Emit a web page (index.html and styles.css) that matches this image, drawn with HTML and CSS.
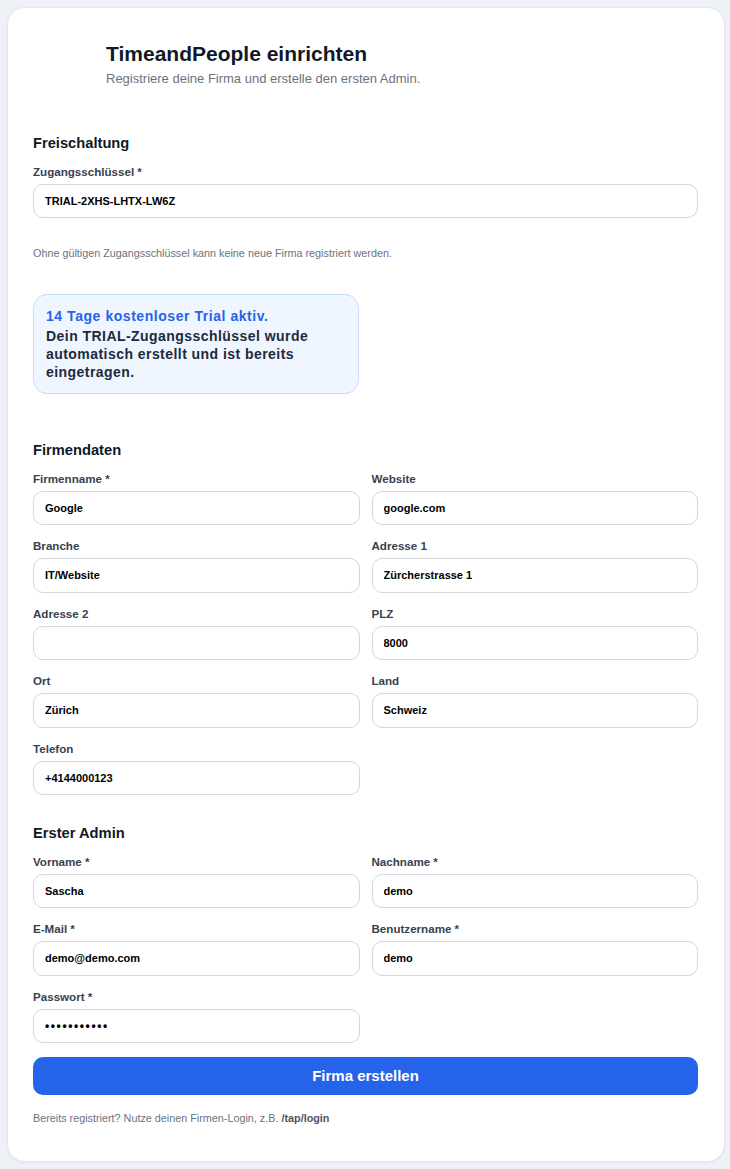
FILE: index.html
```html
<!DOCTYPE html>
<html lang="de">
<head>
<meta charset="utf-8">
<title>TimeandPeople einrichten</title>
<link rel="stylesheet" href="styles.css">
</head>
<body>
<main class="card">
  <header class="head">
    <div class="logo-slot"></div>
    <div class="head-text">
      <h1 class="title">TimeandPeople einrichten</h1>
      <p class="subtitle">Registriere deine Firma und erstelle den ersten Admin.</p>
    </div>
  </header>

  <section class="section">
    <h2 class="section-title">Freischaltung</h2>
    <div class="field">
      <label class="label">Zugangsschlüssel *</label>
      <input class="input" type="text" value="TRIAL-2XHS-LHTX-LW6Z">
    </div>
    <p class="hint">Ohne gültigen Zugangsschlüssel kann keine neue Firma registriert werden.</p>
    <div class="trial">
      <div class="trial-title">14 Tage kostenloser Trial aktiv.</div>
      <div class="trial-body">Dein TRIAL-Zugangsschlüssel wurde automatisch erstellt und ist bereits eingetragen.</div>
    </div>
  </section>

  <section class="section section-company">
    <h2 class="section-title">Firmendaten</h2>
    <div class="grid">
      <div class="field"><label class="label">Firmenname *</label><input class="input" type="text" value="Google"></div>
      <div class="field"><label class="label">Website</label><input class="input" type="text" value="google.com"></div>
      <div class="field"><label class="label">Branche</label><input class="input" type="text" value="IT/Website"></div>
      <div class="field"><label class="label">Adresse 1</label><input class="input" type="text" value="Zürcherstrasse 1"></div>
      <div class="field"><label class="label">Adresse 2</label><input class="input" type="text" value=""></div>
      <div class="field"><label class="label">PLZ</label><input class="input" type="text" value="8000"></div>
      <div class="field"><label class="label">Ort</label><input class="input" type="text" value="Zürich"></div>
      <div class="field"><label class="label">Land</label><input class="input" type="text" value="Schweiz"></div>
      <div class="field"><label class="label">Telefon</label><input class="input" type="text" value="+4144000123"></div>
    </div>
  </section>

  <section class="section section-admin">
    <h2 class="section-title">Erster Admin</h2>
    <div class="grid">
      <div class="field"><label class="label">Vorname *</label><input class="input" type="text" value="Sascha"></div>
      <div class="field"><label class="label">Nachname *</label><input class="input" type="text" value="demo"></div>
      <div class="field"><label class="label">E-Mail *</label><input class="input" type="text" value="demo@demo.com"></div>
      <div class="field"><label class="label">Benutzername *</label><input class="input" type="text" value="demo"></div>
      <div class="field"><label class="label">Passwort *</label><input class="input input-pw" type="password" value="demodemo123"></div>
    </div>
  </section>

  <button class="submit" type="button">Firma erstellen</button>
  <p class="footer">Bereits registriert? Nutze deinen Firmen-Login, z.B. <strong>/tap/login</strong></p>
</main>
</body>
</html>
```

FILE: styles.css
```css
* { box-sizing: border-box; }

html, body {
  margin: 0;
  padding: 0;
}

body {
  background: #eef1f6;
  font-family: "Liberation Sans", Arial, sans-serif;
  color: #111827;
  padding: 7px 5px 8px 7px;
}

.card {
  background: #ffffff;
  border: 1px solid #e3e7ee;
  border-radius: 18px;
  box-shadow: 0 1px 3px rgba(15, 23, 42, 0.05);
  padding: 33px 26px 35px 25px;
}

.head {
  display: flex;
  gap: 12px;
}

.logo-slot {
  width: 61px;
  flex: 0 0 61px;
}

.title {
  margin: 0;
  font-size: 21px;
  line-height: 26px;
  font-weight: 700;
  color: #111827;
}

.subtitle {
  margin: 3px 0 0;
  font-size: 13px;
  line-height: 18px;
  color: #6b7280;
}

.section { margin-top: 45px; }
.section-company { margin-top: 46px; }
.section-admin { margin-top: 28px; }

.section-title {
  margin: 0 0 10.5px;
  font-size: 14.7px;
  line-height: 20px;
  font-weight: 700;
  color: #111827;
}

.field {
  display: flex;
  flex-direction: column;
}

.label {
  font-size: 11.6px;
  line-height: 15px;
  font-weight: 700;
  color: #374151;
  margin-bottom: 5px;
}

.input {
  height: 34.5px;
  width: 100%;
  border: 1px solid #d4d7dd;
  border-radius: 10px;
  background: #ffffff;
  padding: 0 11px;
  font-family: "Liberation Sans", Arial, sans-serif;
  font-size: 11px;
  font-weight: 700;
  color: #000000;
  outline: none;
}

.input-pw {
  letter-spacing: 1.6px;
  font-size: 12px;
}

.hint {
  margin: 28px 0 0;
  font-size: 10.8px;
  line-height: 15px;
  color: #6b7280;
}

.trial {
  margin-top: 33px;
  width: 326px;
  background: #eff6ff;
  border: 1px solid #c3dafb;
  border-radius: 14px;
  padding: 12px 12px 12px;
}

.trial-title {
  font-size: 14px;
  line-height: 18px;
  font-weight: 700;
  letter-spacing: 0.55px;
  color: #2563eb;
}

.trial-body {
  margin-top: 2px;
  font-size: 14px;
  line-height: 18px;
  font-weight: 700;
  letter-spacing: 0.45px;
  color: #1e293b;
}

.grid {
  display: grid;
  grid-template-columns: 1fr 1fr;
  column-gap: 12px;
  row-gap: 13px;
}

.submit {
  display: block;
  width: 100%;
  margin-top: 14px;
  height: 37.5px;
  border: none;
  border-radius: 10px;
  background: #2563eb;
  color: #ffffff;
  font-family: "Liberation Sans", Arial, sans-serif;
  font-size: 15px;
  font-weight: 700;
}

.footer {
  margin: 16px 0 0;
  font-size: 10.8px;
  line-height: 15px;
  color: #6b7280;
}

.footer strong {
  color: #4b5563;
  font-weight: 700;
}
```
